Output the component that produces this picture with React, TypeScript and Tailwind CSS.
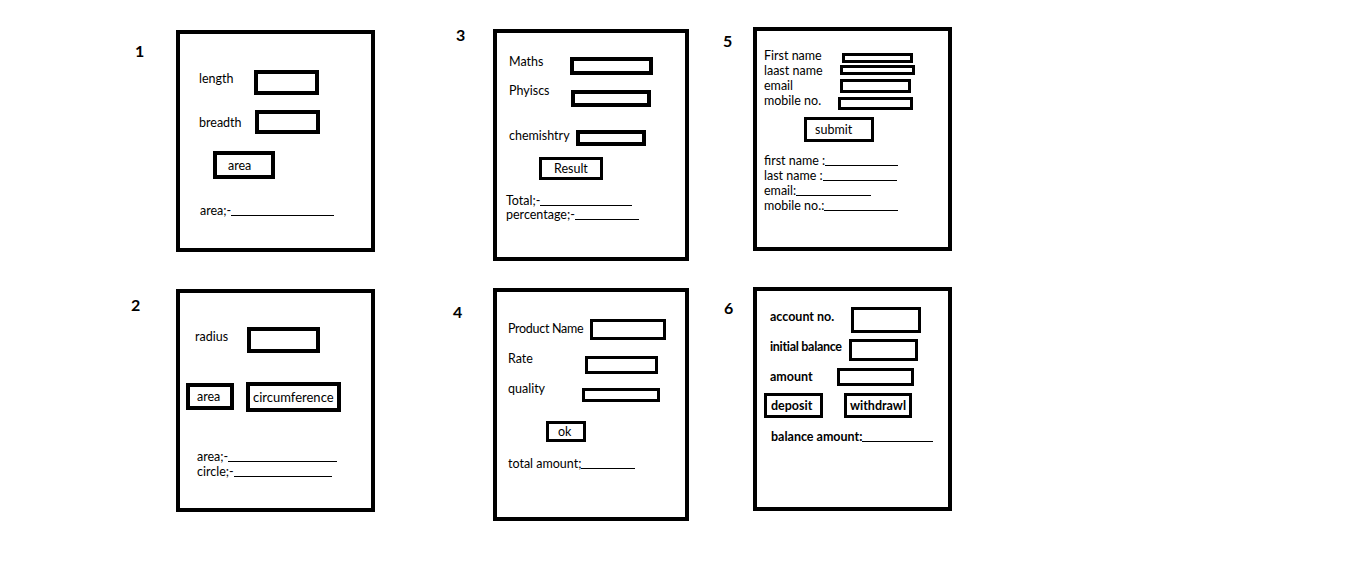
import React from "react";

function Line({ text, cls }: { text: string; cls: string }) {
  return (
    <div className={"flex items-end leading-[15px] " + cls}>
      <span className="whitespace-pre">{text}</span>
      <span className="flex-1 h-[1px] bg-black mb-[2px]" />
    </div>
  );
}

export default function App() {
  return (
    <div className="w-[1360px] h-[585px] bg-white text-black font-['Lato',sans-serif] text-[12.5px] leading-[15px] flex pl-[130px]">
      {/* column 1 */}
      <div className="flex flex-col">
        <div className="flex mt-[30px]">
          <div className="w-[46px] pl-[5px] mt-[13px] text-[16px] font-bold leading-none">1</div>
          <div className="w-[199px] h-[222px] border-4 border-black flex flex-col">
            <div className="flex mt-[36px] ml-[19px]">
              <div className="w-[55px] mt-[1px]">length</div>
              <div className="w-[65px] h-[25px] border-4 border-black" />
            </div>
            <div className="flex mt-[15px] ml-[19px]">
              <div className="w-[56px] mt-[5px]">breadth</div>
              <div className="w-[65px] h-[24px] border-4 border-black" />
            </div>
            <div className="mt-[17px] ml-[33px] w-[62px] h-[28px] border-4 border-black flex items-center pl-[11px]">area</div>
            <Line text="area;-" cls="mt-[24px] ml-[20px] w-[134px]" />
          </div>
        </div>
        <div className="flex mt-[37px]">
          <div className="w-[46px] pl-[1px] mt-[8px] text-[16px] font-bold leading-none">2</div>
          <div className="w-[199px] h-[223px] border-4 border-black flex flex-col">
            <div className="flex mt-[34px] ml-[15px] items-start">
              <div className="w-[52px] mt-[2px]">radius</div>
              <div className="w-[73px] h-[26px] border-4 border-black" />
            </div>
            <div className="flex mt-[29px] ml-[6px] items-start">
              <div className="mt-[1px] w-[48px] h-[27px] border-4 border-black flex items-center pl-[7px]">area</div>
              <div className="ml-[12px] w-[95px] h-[30px] border-4 border-black flex items-center pl-[3px] text-[13px]">circumference</div>
            </div>
            <Line text="area;-" cls="mt-[37px] ml-[17px] w-[140px]" />
            <Line text="circle;-" cls="ml-[17px] w-[135px]" />
          </div>
        </div>
      </div>

      {/* column 2 */}
      <div className="flex flex-col ml-[77px]">
        <div className="flex mt-[29px]">
          <div className="w-[41px] pl-[4px] mt-[-2px] text-[16px] font-bold leading-none">3</div>
          <div className="w-[196px] h-[232px] border-4 border-black flex flex-col">
            <div className="flex mt-[20px] ml-[12px] items-start">
              <div className="w-[61px] mt-[1px]">Maths</div>
              <div className="mt-[4px] w-[83px] h-[18px] border-4 border-black" />
            </div>
            <div className="flex mt-[7px] ml-[12px] items-start">
              <div className="w-[62px] mt-[1px]">Phyiscs</div>
              <div className="mt-[8px] w-[80px] h-[17px] border-4 border-black" />
            </div>
            <div className="flex mt-[21px] ml-[12px] items-start">
              <div className="w-[67px]">chemishtry</div>
              <div className="mt-[2px] w-[70px] h-[16px] border-4 border-black" />
            </div>
            <div className="mt-[11px] ml-[42px] w-[64px] h-[23px] border-[3px] border-black flex items-center pl-[12px]">Result</div>
            <Line text="Total;-" cls="mt-[13px] ml-[9px] w-[126px]" />
            <Line text="percentage;-" cls="mt-[-1px] ml-[9px] w-[133px]" />
          </div>
        </div>
        <div className="flex mt-[27px]">
          <div className="w-[41px] pl-[1px] mt-[16px] text-[16px] font-bold leading-none">4</div>
          <div className="w-[196px] h-[233px] border-4 border-black flex flex-col">
            <div className="flex mt-[27px] ml-[11px] items-start">
              <div className="w-[82px] mt-[2px] whitespace-nowrap tracking-[-0.3px]">Product Name</div>
              <div className="w-[76px] h-[21px] border-[3px] border-black" />
            </div>
            <div className="flex mt-[10px] ml-[11px] items-start">
              <div className="w-[77px] mt-[1px]">Rate</div>
              <div className="mt-[6px] w-[73px] h-[18px] border-[3px] border-black" />
            </div>
            <div className="flex mt-[6px] ml-[11px] items-start">
              <div className="w-[74px] mt-[1px]">quality</div>
              <div className="mt-[8px] w-[78px] h-[14px] border-[3px] border-black" />
            </div>
            <div className="mt-[19px] ml-[49px] w-[40px] h-[21px] border-[3px] border-black flex items-center pl-[9px]">ok</div>
            <Line text="total amount;" cls="mt-[14px] ml-[11px] w-[127px]" />
          </div>
        </div>
      </div>

      {/* column 3 */}
      <div className="flex flex-col ml-[31px]">
        <div className="flex mt-[27px]">
          <div className="w-[33px] pl-[3px] mt-[6px] text-[16px] font-bold leading-none">5</div>
          <div className="w-[199px] h-[224px] border-4 border-black flex flex-col">
            <div className="flex h-[15px] mt-[15px] ml-[7px] items-start">
              <div className="w-[78px] mt-[2px]">First name</div>
              <div className="mt-[7px] w-[71px] h-[10px] border-[3px] border-black" />
            </div>
            <div className="flex h-[15px] ml-[7px] items-start">
              <div className="w-[76px] mt-[2px]">laast name</div>
              <div className="mt-[4px] w-[75px] h-[10px] border-[3px] border-black" />
            </div>
            <div className="flex h-[15px] ml-[7px] items-start">
              <div className="w-[76px] mt-[2px]">email</div>
              <div className="mt-[3px] w-[71px] h-[14px] border-[3px] border-black" />
            </div>
            <div className="flex h-[15px] ml-[7px] items-start">
              <div className="w-[74px] mt-[2px]">mobile no.</div>
              <div className="mt-[6px] w-[75px] h-[13px] border-[3px] border-black" />
            </div>
            <div className="mt-[11px] ml-[47px] w-[70px] h-[25px] border-[3px] border-black flex items-center pl-[8px]">submit</div>
            <Line text="first name :" cls="mt-[11px] ml-[7px] w-[134px]" />
            <Line text="last name :" cls="ml-[7px] w-[133px]" />
            <Line text="email:" cls="ml-[7px] w-[107px]" />
            <Line text="mobile no.:" cls="ml-[7px] w-[134px]" />
          </div>
        </div>
        <div className="flex mt-[36px]">
          <div className="w-[33px] pl-[4px] mt-[13px] text-[16px] font-bold leading-none">6</div>
          <div className="w-[199px] h-[224px] border-4 border-black flex flex-col font-bold">
            <div className="flex mt-[16px] ml-[13px] items-start">
              <div className="w-[81px] mt-[2px]">account no.</div>
              <div className="w-[70px] h-[26px] border-[3px] border-black" />
            </div>
            <div className="flex mt-[5px] ml-[13px] items-start">
              <div className="w-[79px] mt-[1px] whitespace-nowrap tracking-[-0.3px]">initial balance</div>
              <div className="mt-[1px] w-[69px] h-[22px] border-[3px] border-black" />
            </div>
            <div className="flex mt-[6px] ml-[13px] items-start">
              <div className="w-[67px] mt-[2px]">amount</div>
              <div className="mt-[1px] w-[77px] h-[18px] border-[3px] border-black" />
            </div>
            <div className="flex mt-[7px] ml-[7px]">
              <div className="w-[59px] h-[25px] border-[3px] border-black flex items-center pl-[4px]">deposit</div>
              <div className="ml-[21px] w-[68px] h-[25px] border-[3px] border-black flex items-center pl-[3px]">withdrawl</div>
            </div>
            <Line text="balance amount:" cls="mt-[11px] ml-[14px] w-[162px]" />
          </div>
        </div>
      </div>
    </div>
  );
}
